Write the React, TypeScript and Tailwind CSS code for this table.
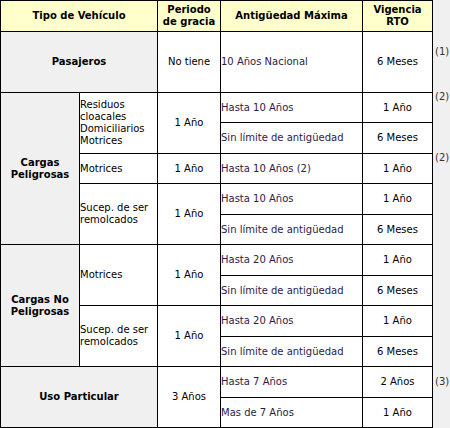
import React from 'react'

type CellProps = {
  children?: React.ReactNode
  className?: string
}

// generic bordered cell: right + bottom lines, table gives left + top
function Cell({ children, className = '' }: CellProps) {
  return (
    <div className={`flex items-center border-r border-b border-black ${className}`}>
      {children}
    </div>
  )
}

function Head({ children, className = '' }: CellProps) {
  return (
    <Cell className={`justify-center bg-[#ffffcc] text-center font-bold ${className}`}>
      <span>{children}</span>
    </Cell>
  )
}

function Group({ children, className = '' }: CellProps) {
  return (
    <Cell className={`justify-center bg-[#f0f0f0] text-center font-bold ${className}`}>
      <span>{children}</span>
    </Cell>
  )
}

function Sub({ children, className = '' }: CellProps) {
  return (
    <Cell className={`justify-start bg-white text-left ${className}`}>
      <span>{children}</span>
    </Cell>
  )
}

function Mid({ children, className = '' }: CellProps) {
  return (
    <Cell className={`justify-center bg-white text-center ${className}`}>
      <span>{children}</span>
    </Cell>
  )
}

function Age({ children }: CellProps) {
  return (
    <Cell className="justify-start bg-white text-left text-[#2e1a47]">
      <span>{children}</span>
    </Cell>
  )
}

export default function App() {
  return (
    <div className="min-h-screen w-full bg-[#f0f0f0] font-['DejaVu_Sans',Verdana,sans-serif] text-[10px] leading-[12px] text-black">
      <div className="flex items-start">
        <div className="grid grid-cols-[79px_78px_63px_142px_70px] grid-rows-[31px_61px_30px_31px_30px_31px_30px_31px_30px_31px_30px_31px_30px] border-l border-t border-black">
          {/* header */}
          <Head className="col-span-2">Tipo de Vehículo</Head>
          <Head>
            Periodo
            <br />
            de gracia
          </Head>
          <Head>Antigüedad Máxima</Head>
          <Head>
            Vigencia
            <br />
            RTO
          </Head>

          {/* Pasajeros */}
          <Group className="col-span-2">Pasajeros</Group>
          <Mid>No tiene</Mid>
          <Age>10 Años Nacional</Age>
          <Mid>6 Meses</Mid>

          {/* Cargas Peligrosas */}
          <Group className="row-span-5">
            Cargas
            <br />
            Peligrosas
          </Group>
          <Sub className="row-span-2">
            Residuos
            <br />
            cloacales
            <br />
            Domiciliarios
            <br />
            Motrices
          </Sub>
          <Mid className="row-span-2">1 Año</Mid>
          <Age>Hasta 10 Años</Age>
          <Mid>1 Año</Mid>
          <Age>Sin límite de antigüedad</Age>
          <Mid>6 Meses</Mid>

          <Sub>Motrices</Sub>
          <Mid>1 Año</Mid>
          <Age>Hasta 10 Años (2)</Age>
          <Mid>1 Año</Mid>

          <Sub className="row-span-2">
            Sucep. de ser
            <br />
            remolcados
          </Sub>
          <Mid className="row-span-2">1 Año</Mid>
          <Age>Hasta 10 Años</Age>
          <Mid>1 Año</Mid>
          <Age>Sin límite de antigüedad</Age>
          <Mid>6 Meses</Mid>

          {/* Cargas No Peligrosas */}
          <Group className="row-span-4">
            Cargas No
            <br />
            Peligrosas
          </Group>
          <Sub className="row-span-2">Motrices</Sub>
          <Mid className="row-span-2">1 Año</Mid>
          <Age>Hasta 20 Años</Age>
          <Mid>1 Año</Mid>
          <Age>Sin límite de antigüedad</Age>
          <Mid>6 Meses</Mid>

          <Sub className="row-span-2">
            Sucep. de ser
            <br />
            remolcados
          </Sub>
          <Mid className="row-span-2">1 Año</Mid>
          <Age>Hasta 20 Años</Age>
          <Mid>1 Año</Mid>
          <Age>Sin límite de antigüedad</Age>
          <Mid>6 Meses</Mid>

          {/* Uso Particular */}
          <Group className="col-span-2 row-span-2">Uso Particular</Group>
          <Mid className="row-span-2">3 Años</Mid>
          <Age>Hasta 7 Años</Age>
          <Mid>2 Años</Mid>
          <Age>Mas de 7 Años</Age>
          <Mid>1 Año</Mid>
        </div>

        {/* footnote markers */}
        <div className="ml-[2px] flex flex-col text-[#333333]">
          <span className="mt-[46px]">(1)</span>
          <span className="mt-[33px]">(2)</span>
          <span className="mt-[49px]">(2)</span>
          <span className="mt-[212px]">(3)</span>
        </div>
      </div>
    </div>
  )
}
